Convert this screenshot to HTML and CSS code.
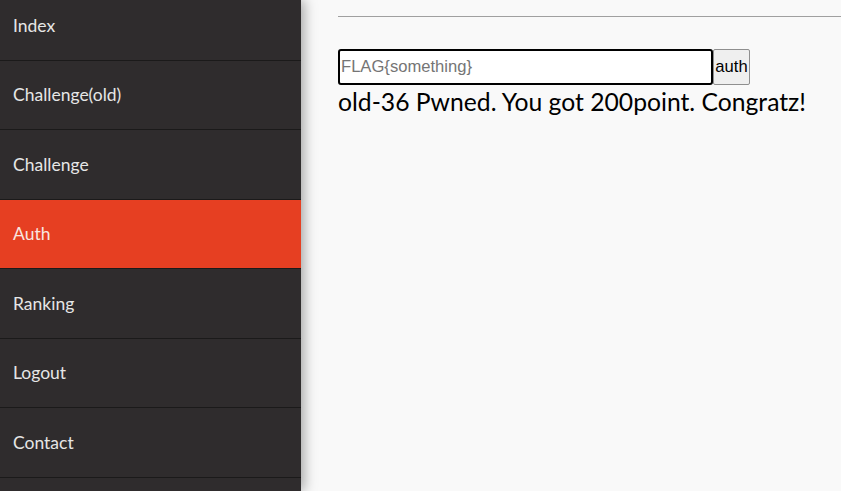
FILE: index.html
```html
<!DOCTYPE html>
<html>
<head>
<meta charset="utf-8">
<link rel="stylesheet" href="styles.css">
</head>
<body>
<div class="layout">
  <nav class="sidebar">
    <a class="item first" href="#">Index</a>
    <a class="item" href="#">Challenge(old)</a>
    <a class="item" href="#">Challenge</a>
    <a class="item active" href="#">Auth</a>
    <a class="item" href="#">Ranking</a>
    <a class="item" href="#">Logout</a>
    <a class="item" href="#">Contact</a>
  </nav>
  <main class="main">
    <hr class="rule">
    <form class="auth-form">
      <input class="flag" type="text" placeholder="FLAG{something}"><button class="btn" type="button">auth</button>
    </form>
    <div class="msg">old-36 Pwned. You got 200point. Congratz!</div>
  </main>
</div>
</body>
</html>
```
FILE: styles.css
```css
html, body { margin: 0; padding: 0; height: 100%; overflow: hidden; }
body { background: #f9f9f9; font-family: Lato, "Liberation Sans", sans-serif; }
.layout { display: flex; height: 100%; }
.sidebar {
  width: 301px; flex: none; background: #2f2c2d;
  display: flex; flex-direction: column;
  box-shadow: 3px 0 12px rgba(0,0,0,0.35);
  position: relative; z-index: 1;
  overflow: hidden;
}
.item {
  display: flex; align-items: center; flex: none;
  height: 68.5px; border-bottom: 1px solid #1b1a1a;
  padding-left: 13px; color: #e6e6e6; text-decoration: none;
  font-size: 17.5px;
}
.item.first { margin-top: -9px; }
.item.active { background: #e63f22; color: #f8e6e0; }
.main { flex: 1; padding: 0 0 0 37px; }
.rule { margin: 16px 0 0 0; border: 0; border-top: 1px solid #a0a0a0; height: 0; }
.auth-form { margin-top: 32px; display: flex; height: 36px; }
.flag {
  width: 375px; height: 36px; box-sizing: border-box; margin: 0;
  border: 2px solid #000; border-radius: 3px; background: #fff;
  font-family: Arial, "Liberation Sans", sans-serif; font-size: 16.6px; padding: 0 1px; outline: none;
}
.flag::placeholder { color: #757575; }
.btn {
  width: 37px; height: 36px; margin: 0; padding: 0; box-sizing: border-box;
  border: 1px solid #8f8f8f; border-radius: 2px; background: #efefef; color: #000;
  font-family: Arial, "Liberation Sans", sans-serif; font-size: 16.6px;
}
.msg { font-size: 24.7px; color: #000; line-height: 1.1; margin-top: 3px; }
```
